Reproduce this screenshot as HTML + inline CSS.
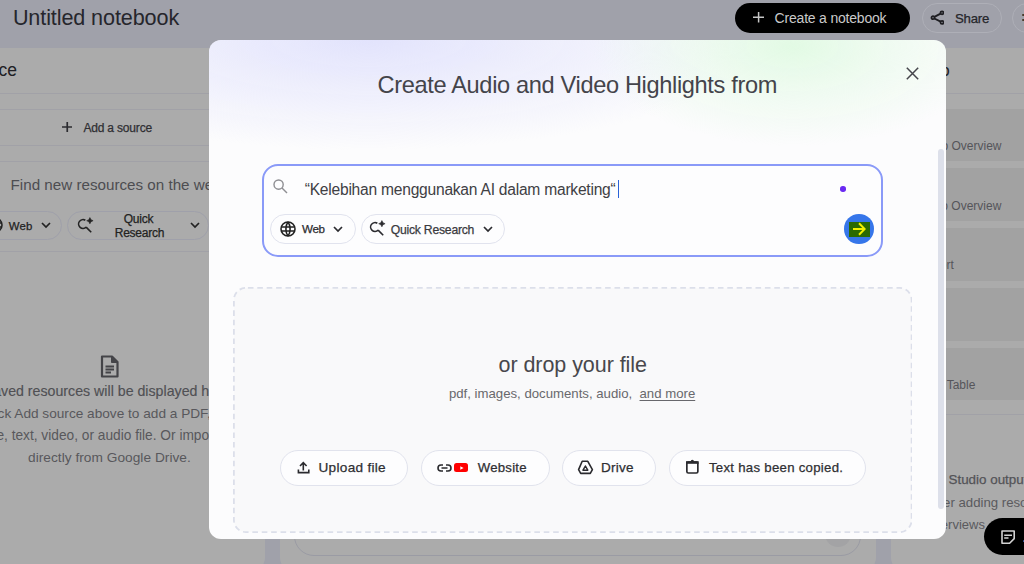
<!DOCTYPE html><html><head><meta charset="utf-8"><style>
*{margin:0;padding:0;box-sizing:border-box}
html,body{width:1024px;height:564px;overflow:hidden;background:#a0a1aa;font-family:"Liberation Sans",sans-serif}
.a{position:absolute}
.t{position:absolute;line-height:1;white-space:nowrap;font-family:"Liberation Sans",sans-serif}
</style></head><body>
<div class="t" style="left:12.90px;top:6.84px;font-size:21.6px;color:#26262c;font-weight:normal;letter-spacing:-0.111px;">Untitled notebook</div>
<div class="a" style="left:735px;top:2.5px;width:175.00px;height:30.00px;background:#000;border-radius:15px"></div>
<svg class="a" style="left:752.75px;top:12.4px;" width="11.25" height="10.5" viewBox="0 0 11.25 10.5"><path d="M5.6 0V10.5M0 5.25H11.25" stroke="#c6c6c6" stroke-width="1.5"/></svg>
<div class="t" style="left:774.60px;top:10.60px;font-size:14.0px;color:#cacaca;font-weight:normal;letter-spacing:-0.200px;">Create a notebook</div>
<div class="a" style="left:921.5px;top:3px;width:80.00px;height:30.00px;border:1px solid #aeafb7;border-radius:15px"></div>
<svg class="a" style="left:930px;top:10px;" width="14" height="15" viewBox="0 0 14 15"><g fill="none" stroke="#1e1e22" stroke-width="1.8"><circle cx="12" cy="2.8" r="1.5"/><circle cx="12" cy="12.4" r="1.5"/><circle cx="3" cy="7.7" r="1.5"/><path d="M4.4 6.9L10.6 3.6M4.4 8.5L10.6 11.6"/></g></svg>
<div class="t" style="left:955.00px;top:12.18px;font-size:13.2px;color:#26262b;font-weight:normal;letter-spacing:-0.214px;-webkit-text-stroke:0.25px currentColor;">Share</div>
<div class="a" style="left:1012px;top:3px;width:48.00px;height:30.00px;border:1px solid #aeafb7;border-radius:15px"></div>
<div class="a" style="left:1022px;top:13.5px;width:2.50px;height:2.50px;background:#4a3a2a;border-radius:50%"></div>
<div class="a" style="left:1022px;top:18.5px;width:2.50px;height:2.50px;background:#4a3a2a;border-radius:50%"></div>
<div class="a" style="left:-47px;top:47.5px;width:312.00px;height:525.50px;background:#ababab;border-radius:16px"></div>
<div class="t" style="left:-38.42px;top:61.82px;font-size:17.5px;color:#202024;font-weight:normal;">Source</div>
<div class="a" style="left:0px;top:92.5px;width:265.00px;height:1.00px;background:#a1a1a7"></div>
<div class="a" style="left:0px;top:108.5px;width:265.00px;height:1.00px;background:#a1a1a7"></div>
<svg class="a" style="left:61.5px;top:122px;" width="10.5" height="10" viewBox="0 0 10.5 10"><path d="M5.25 0V10M0 5H10.5" stroke="#2c2c30" stroke-width="1.7"/></svg>
<div class="t" style="left:83.40px;top:121.60px;font-size:12.0px;color:#2f2f33;font-weight:normal;letter-spacing:-0.176px;-webkit-text-stroke:0.25px currentColor;">Add a source</div>
<div class="a" style="left:0px;top:145px;width:265.00px;height:1.00px;background:#a1a1a7"></div>
<div class="a" style="left:0px;top:161px;width:265.00px;height:1.00px;background:#a1a1a7"></div>
<div class="t" style="left:10.60px;top:177.48px;font-size:15.2px;color:#4d4d51;font-weight:normal;">Find new resources on the web</div>
<div class="a" style="left:-40px;top:210.5px;width:102.00px;height:29.50px;border:1px solid #9fa0aa;border-radius:15px"></div>
<svg class="a" style="left:-13px;top:217px;" width="16" height="16" viewBox="0 0 16 16"><g fill="none" stroke="#222" stroke-width="1.6"><circle cx="8" cy="8" r="7"/><path d="M1 6H15M1 10H15M8 1C5.2 4.5 5.2 11.5 8 15M8 1C10.8 4.5 10.8 11.5 8 15"/></g></svg>
<div class="t" style="left:8.75px;top:221.21px;font-size:11.4px;color:#222;font-weight:normal;letter-spacing:0.185px;-webkit-text-stroke:0.25px currentColor;">Web</div>
<svg class="a" style="left:41px;top:222px;" width="10" height="7" viewBox="0 0 10 7"><path d="M1 1L5 5L9 1" fill="none" stroke="#222" stroke-width="1.7"/></svg>
<div class="a" style="left:67px;top:210.5px;width:142.00px;height:29.50px;border:1px solid #9fa0aa;border-radius:15px"></div>
<svg class="a" style="left:76.7px;top:216px;" width="18" height="18" viewBox="0 0 18 18"><g fill="none" stroke="#222" stroke-width="1.6"><path d="M8.33 4.27A4.4 4.4 0 1 0 9.11 11.11"/><path d="M9.11 11.11L14.2 16.2"/></g><path d="M12.9 1.6Q13.4 4.2 16.1 4.7Q13.4 5.2 12.9 7.8Q12.4 5.2 9.7 4.7Q12.4 4.2 12.9 1.6Z" fill="#222" stroke="#222" stroke-width="0.6" stroke-linejoin="round"/></svg>
<div class="t" style="left:123.75px;top:213.20px;font-size:12px;color:#222;font-weight:normal;letter-spacing:-0.256px;-webkit-text-stroke:0.25px currentColor;">Quick</div>
<div class="t" style="left:114.75px;top:227.20px;font-size:12px;color:#222;font-weight:normal;letter-spacing:-0.241px;-webkit-text-stroke:0.25px currentColor;">Research</div>
<svg class="a" style="left:189.5px;top:222px;" width="10" height="7" viewBox="0 0 10 7"><path d="M1 1L5 5L9 1" fill="none" stroke="#222" stroke-width="1.7"/></svg>
<div class="a" style="left:0px;top:251px;width:265.00px;height:1.00px;background:#a1a1a7"></div>
<svg class="a" style="left:100px;top:355px;" width="19" height="23" viewBox="0 0 19 23"><path d="M2 1.5H12L17.5 7V21.5H2Z" fill="none" stroke="#444448" stroke-width="2.2" stroke-linejoin="round"/><path d="M11.5 1.5V7.5H17.5Z" fill="#444448" stroke="#444448" stroke-width="1" stroke-linejoin="round"/><path d="M5.5 11.5H14M5.5 14.5H14M5.5 17.5H11" stroke="#444448" stroke-width="1.8"/></svg>
<div class="t" style="left:-16.30px;top:384.33px;font-size:14.2px;color:#505054;font-weight:normal;-webkit-text-stroke:0.15px currentColor;">Saved resources will be displayed here</div>
<div class="t" style="left:-18.30px;top:406.70px;font-size:13.65px;color:#58585c;font-weight:normal;">Click Add source above to add a PDF, image,</div>
<div class="t" style="left:-42.50px;top:429.13px;font-size:13.73px;color:#58585c;font-weight:normal;">website, text, video, or audio file. Or import a file</div>
<div class="t" style="left:28.00px;top:451.46px;font-size:13.7px;color:#58585c;font-weight:normal;letter-spacing:0.030px;">directly from Google Drive.</div>
<div class="a" style="left:279.5px;top:47.5px;width:596.50px;height:525.50px;background:#ababab;border-radius:16px"></div>
<div class="a" style="left:294px;top:470px;width:567.00px;height:86.00px;border:1.2px solid #9a9ba4;border-radius:20px"></div>
<div class="a" style="left:825px;top:521px;width:26.00px;height:26.00px;background:#a3a3a5;border-radius:50%"></div>
<div class="a" style="left:891px;top:47.5px;width:209.00px;height:525.50px;background:#ababab;border-radius:16px"></div>
<div class="t" style="left:902.79px;top:62.17px;font-size:16.5px;color:#202024;font-weight:normal;">Studio</div>
<div class="a" style="left:891px;top:92.5px;width:133.00px;height:1.00px;background:#a1a1a7"></div>
<div class="a" style="left:905px;top:109px;width:195.00px;height:52.00px;background:#a2a2a2;border-radius:8px"></div>
<div class="t" style="left:917.50px;top:140.30px;font-size:12px;color:#55555a;font-weight:normal;">Audio Overview</div>
<div class="a" style="left:905px;top:168px;width:195.00px;height:52.50px;background:#a2a2a2;border-radius:8px"></div>
<div class="t" style="left:917.50px;top:199.90px;font-size:12px;color:#55555a;font-weight:normal;">Video Overview</div>
<div class="a" style="left:905px;top:228px;width:195.00px;height:53.00px;background:#a2a2a2;border-radius:8px"></div>
<div class="t" style="left:917.80px;top:259.40px;font-size:12px;color:#55555a;font-weight:normal;">Report</div>
<div class="a" style="left:905px;top:288px;width:195.00px;height:52.50px;background:#a2a2a2;border-radius:8px"></div>
<div class="a" style="left:905px;top:348px;width:195.00px;height:52.00px;background:#a2a2a2;border-radius:8px"></div>
<div class="t" style="left:918.20px;top:379.40px;font-size:12px;color:#55555a;font-weight:normal;">Data Table</div>
<div class="a" style="left:891px;top:414px;width:133.00px;height:1.00px;background:#a1a1a7"></div>
<div class="t" style="left:948.50px;top:472.61px;font-size:13.4px;color:#535357;font-weight:normal;-webkit-text-stroke:0.25px currentColor;">Studio output will be saved here</div>
<div class="t" style="left:927.00px;top:496.18px;font-size:13.2px;color:#5a5a5e;font-weight:normal;">After adding resources, click</div>
<div class="t" style="left:887.36px;top:518.15px;font-size:13px;color:#5a5a5e;font-weight:normal;">Audio Overviews</div>
<div class="a" style="left:984.3px;top:518px;width:115.70px;height:37.00px;background:#000;border-radius:18.5px"></div>
<svg class="a" style="left:1001px;top:530px;" width="15" height="14" viewBox="0 0 15 14"><path d="M1 1H13.2V8.6L8.6 13.2H1Z" fill="none" stroke="#d2d2d2" stroke-width="1.6" stroke-linejoin="round"/><path d="M3.2 5.2H11M3.2 8H7.5" stroke="#d2d2d2" stroke-width="1.5"/></svg>
<div class="a" style="left:1022.5px;top:540px;width:1.50px;height:2.00px;background:#3a5aa0;border-radius:1px"></div>
<div class="a" style="left:209px;top:40px;width:737.00px;height:498.50px;background:#fcfcfd;border-radius:12px;overflow:hidden"></div>
<div class="a" style="left:209px;top:40px;width:737.00px;height:150.00px;background:radial-gradient(ellipse 200px 100px at 584px 6px, rgba(226,250,228,1), rgba(226,250,228,0.5) 45%, rgba(226,250,228,0) 100%),radial-gradient(ellipse 390px 110px at 160px 0px, rgba(226,227,252,1), rgba(226,227,252,0.55) 45%, rgba(226,227,252,0) 100%);border-radius:12px 12px 0 0"></div>
<div class="t" style="left:377.60px;top:74.44px;font-size:23.6px;color:#44444a;font-weight:normal;letter-spacing:-0.350px;">Create Audio and Video Highlights from</div>
<svg class="a" style="left:906px;top:67px;" width="13" height="13" viewBox="0 0 13 13"><path d="M0.8 0.8L12.2 12.2M12.2 0.8L0.8 12.2" stroke="#45454b" stroke-width="1.5"/></svg>
<div class="a" style="left:938px;top:149px;width:6.00px;height:360.00px;background:#dde0ea;border-radius:3px"></div>
<div class="a" style="left:261.8px;top:164px;width:621.20px;height:92.50px;border:2px solid #8a9af8;border-radius:16px;background:#fdfdfe"></div>
<svg class="a" style="left:272.5px;top:178.5px;" width="15" height="15" viewBox="0 0 15 15"><g fill="none" stroke="#8e8e92" stroke-width="1.4"><circle cx="5.6" cy="5.6" r="4.6"/><path d="M9 9L14 14"/></g></svg>
<div class="t" style="left:304.75px;top:181.64px;font-size:15.6px;color:#404044;font-weight:normal;letter-spacing:-0.238px;">“Kelebihan menggunakan AI dalam marketing“</div>
<div class="a" style="left:617.8px;top:179.7px;width:1.40px;height:18.30px;background:#2a63d8"></div>
<div class="a" style="left:840px;top:186px;width:5.50px;height:5.50px;background:#6a2af2;border-radius:50%"></div>
<div class="a" style="left:270px;top:214px;width:86.00px;height:30.00px;border:1px solid #e1e3ee;border-radius:15px"></div>
<svg class="a" style="left:279.5px;top:220.5px;" width="16" height="16" viewBox="0 0 16 16"><g fill="none" stroke="#222" stroke-width="1.6"><circle cx="8" cy="8" r="7"/><path d="M1 6H15M1 10H15M8 1C5.2 4.5 5.2 11.5 8 15M8 1C10.8 4.5 10.8 11.5 8 15"/></g></svg>
<div class="t" style="left:302.00px;top:222.94px;font-size:11.6px;color:#2b2b2f;font-weight:normal;letter-spacing:-0.341px;-webkit-text-stroke:0.25px currentColor;">Web</div>
<svg class="a" style="left:332.7px;top:225.5px;" width="10" height="7" viewBox="0 0 10 7"><path d="M1 1L5 5L9 1" fill="none" stroke="#2b2b2f" stroke-width="1.7"/></svg>
<div class="a" style="left:360.5px;top:214px;width:144.00px;height:30.00px;border:1px solid #e1e3ee;border-radius:15px"></div>
<svg class="a" style="left:369.4px;top:219.2px;" width="18" height="18" viewBox="0 0 18 18"><g fill="none" stroke="#2b2b2f" stroke-width="1.6"><path d="M8.33 4.27A4.4 4.4 0 1 0 9.11 11.11"/><path d="M9.11 11.11L14.2 16.2"/></g><path d="M12.9 1.6Q13.4 4.2 16.1 4.7Q13.4 5.2 12.9 7.8Q12.4 5.2 9.7 4.7Q12.4 4.2 12.9 1.6Z" fill="#2b2b2f" stroke="#2b2b2f" stroke-width="0.6" stroke-linejoin="round"/></svg>
<div class="t" style="left:390.75px;top:223.63px;font-size:12.2px;color:#3a3a3e;font-weight:normal;letter-spacing:-0.236px;-webkit-text-stroke:0.25px currentColor;">Quick Research</div>
<svg class="a" style="left:483px;top:226px;" width="10" height="7" viewBox="0 0 10 7"><path d="M1 1L5 5L9 1" fill="none" stroke="#2b2b2f" stroke-width="1.7"/></svg>
<div class="a" style="left:844.4px;top:214px;width:29.80px;height:29.80px;background:#3676ea;border-radius:50%"></div>
<div class="a" style="left:848.8px;top:221.8px;width:20.90px;height:14.80px;background:#2b6a02"></div>
<svg class="a" style="left:852px;top:222px;" width="14" height="14" viewBox="0 0 14 14"><path d="M1 7H12.8M7 1.3L12.7 7L7 12.7" fill="none" stroke="#f4f000" stroke-width="2"/></svg>
<svg class="a" style="left:232.5px;top:287px;" width="679.5" height="246" viewBox="0 0 679.5 246"><rect x="0.9" y="0.9" width="677.7" height="244.2" rx="12" fill="#f9f9fa" stroke="#dcdfea" stroke-width="1.8" stroke-dasharray="5.6 3.8" stroke-dashoffset="-2"/></svg>
<div class="t" style="left:498.50px;top:354.93px;font-size:21.5px;color:#48484c;font-weight:normal;letter-spacing:-0.057px;">or drop your file</div>
<div class="t" style="left:448.90px;top:386.58px;font-size:13.2px;color:#68686c;font-weight:normal;">pdf, images, documents, audio,&nbsp; <span style="text-decoration:underline;text-underline-offset:2px">and more</span></div>
<div class="a" style="left:279.5px;top:449.5px;width:128.50px;height:36.00px;background:#fdfdfe;border:1px solid #e1e3ed;border-radius:18px"></div>
<div class="a" style="left:420.5px;top:449.5px;width:129.00px;height:36.00px;background:#fdfdfe;border:1px solid #e1e3ed;border-radius:18px"></div>
<div class="a" style="left:561.5px;top:449.5px;width:94.50px;height:36.00px;background:#fdfdfe;border:1px solid #e1e3ed;border-radius:18px"></div>
<div class="a" style="left:669px;top:449.5px;width:197.00px;height:36.00px;background:#fdfdfe;border:1px solid #e1e3ed;border-radius:18px"></div>
<svg class="a" style="left:297px;top:461px;" width="13" height="13" viewBox="0 0 13 13"><path d="M6.3 2V9.5M3 5L6.3 1.7L9.6 5" fill="none" stroke="#2a2a2e" stroke-width="1.6"/><path d="M1.4 8.5V11.6H11.8V8.5" fill="none" stroke="#2a2a2e" stroke-width="1.6"/></svg>
<div class="t" style="left:318.50px;top:460.84px;font-size:13.6px;color:#2f2f33;font-weight:normal;letter-spacing:0.293px;-webkit-text-stroke:0.25px currentColor;">Upload file</div>
<svg class="a" style="left:437px;top:463.5px;" width="15" height="8" viewBox="0 0 15 8"><path d="M6 1H4A3 3 0 0 0 4 7H6M9 1H11A3 3 0 0 1 11 7H9M4.5 4H10.5" fill="none" stroke="#2a2a2e" stroke-width="1.6"/></svg>
<div class="a" style="left:454.4px;top:463px;width:14.10px;height:9.30px;background:#f00;border-radius:2.5px"></div>
<svg class="a" style="left:459.6px;top:465.7px;" width="4" height="4" viewBox="0 0 4 4"><path d="M0.3 0.2L3.6 2L0.3 3.8Z" fill="#fff"/></svg>
<div class="t" style="left:477.75px;top:460.58px;font-size:13.2px;color:#2f2f33;font-weight:normal;letter-spacing:0.239px;-webkit-text-stroke:0.25px currentColor;">Website</div>
<svg class="a" style="left:577px;top:460px;" width="17" height="15" viewBox="0 0 17 15"><path d="M5.2 1.3H10.8L15.4 9.6L13.3 13.4H3.7L1.6 9.6Z" fill="none" stroke="#2a2a2e" stroke-width="1.6" stroke-linejoin="round"/><path d="M8.4 6L10.8 10.2H6Z" fill="none" stroke="#2a2a2e" stroke-width="1.5" stroke-linejoin="round"/></svg>
<div class="t" style="left:601.00px;top:460.93px;font-size:13.5px;color:#2f2f33;font-weight:normal;letter-spacing:0.226px;-webkit-text-stroke:0.25px currentColor;">Drive</div>
<svg class="a" style="left:685px;top:459px;" width="15" height="16" viewBox="0 0 15 16"><rect x="1.85" y="3" width="11" height="11" rx="1.5" fill="none" stroke="#2a2a2e" stroke-width="1.7"/><rect x="1" y="2.2" width="12.7" height="2.6" fill="#2a2a2e"/><circle cx="7.35" cy="2.3" r="1.6" fill="#2a2a2e"/></svg>
<div class="t" style="left:709.00px;top:460.58px;font-size:13.2px;color:#2f2f33;font-weight:normal;letter-spacing:0.281px;-webkit-text-stroke:0.25px currentColor;">Text has been copied.</div>
</body></html>
